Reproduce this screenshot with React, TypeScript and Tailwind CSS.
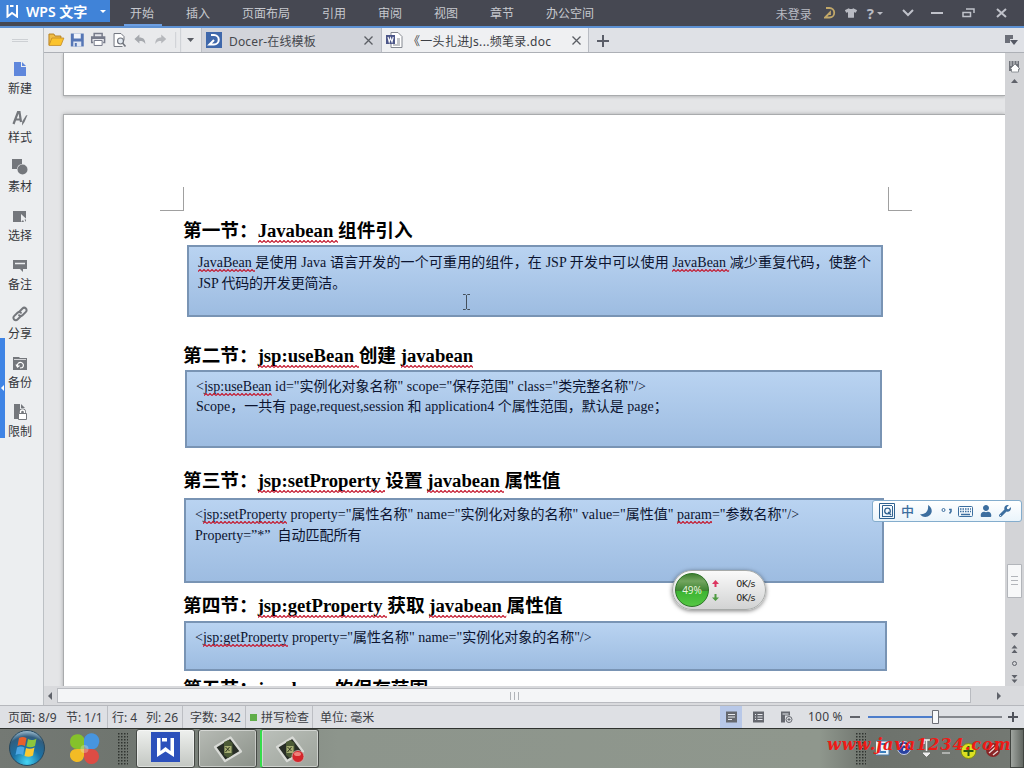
import React from "react";
import { FaUser, FaWrench, FaTshirt } from "react-icons/fa";

const menuItems = ["开始", "插入", "页面布局", "引用", "审阅", "视图", "章节", "办公空间"];

const Typo = ({ children }: { children: React.ReactNode }) => (
  <span className="relative inline-block">
    {children}
    <svg className="absolute left-0 bottom-px w-full h-[3px]">
      <rect width="100%" height="3" fill="url(#squiggle)" />
    </svg>
  </span>
);

const SquiggleDefs = () => (
  <svg className="absolute w-0 h-0">
    <defs>
      <pattern id="squiggle" width="4" height="3" patternUnits="userSpaceOnUse">
        <path d="M0 2.500L2 .5L4 2.500" fill="none" stroke="#c4182e" strokeWidth="1.200" />
      </pattern>
    </defs>
  </svg>
);

const sideTools = [
  {
    label: "新建",
    icon: (
      <>
        <path d="M2 1h7v5h5v9H2z" fill="#5f87dc" />
        <path d="M10 1l4 4h-4z" fill="#5f87dc" />
      </>
    ),
  },
  {
    label: "样式",
    icon: (
      <>
        <path d="M1.500 14L6 2h1.500L9 12M3.500 9.500H8.500" fill="none" stroke="#74777c" strokeWidth="2.200" />
        <path d="M15.500 5l-3 7-2.500 3.500.2-4 3.800-6z" fill="#74777c" />
      </>
    ),
  },
  {
    label: "素材",
    icon: (
      <>
        <path d="M0 0h10v5a5.500 5.500 0 0 0-5 5H0z" fill="#74777c" />
        <circle cx="10.500" cy="10.500" r="5" fill="#74777c" />
      </>
    ),
  },
  {
    label: "选择",
    icon: (
      <>
        <path d="M1 3h13v11H1z" fill="#74777c" />
        <path d="M9 6v8l2-2 1.500 3 1.500-1-1.500-2.500H15z" fill="#eceef0" />
      </>
    ),
  },
  {
    label: "备注",
    icon: (
      <>
        <path d="M1 3h14v9h-4v3l-3-3H1z" fill="#74777c" />
        <path d="M3 6.500h10" stroke="#eceef0" strokeWidth="1.500" />
      </>
    ),
  },
  {
    label: "分享",
    icon: (
      <g fill="none" stroke="#74777c" strokeWidth="2" strokeLinecap="round">
        <path d="M7 6l3.500-3.500a2.400 2.400 0 0 1 3.400 3.400L10.500 9.300a2.400 2.400 0 0 1-3.400 0" />
        <path d="M9 10l-3.500 3.500a2.400 2.400 0 0 1-3.400-3.400L5.500 6.700a2.400 2.400 0 0 1 3.400 0" />
      </g>
    ),
  },
  {
    label: "备份",
    icon: (
      <>
        <path d="M1 2h6l1 1h7v12H1z" fill="#74777c" />
        <path d="M2 4.500h12" stroke="#eceef0" strokeWidth=".8" />
        <path d="M5.500 11a3 3 0 1 1 5 1.500M4 9.500L5.500 12l2-1.500M8 13l3-.5" fill="none" stroke="#fff" strokeWidth="1.200" />
      </>
    ),
  },
  {
    label: "限制",
    icon: (
      <>
        <path d="M2 0h6v5h5v10H2z" fill="#74777c" />
        <path d="M9 0l4 4H9z" fill="#74777c" />
        <path d="M8.500 10V8a2 2 0 0 1 4 0v2" fill="none" stroke="#74777c" strokeWidth="3" />
        <path d="M8.500 10V8a2 2 0 0 1 4 0v2" fill="none" stroke="#fff" strokeWidth="1.400" />
        <path d="M6.500 9.500h8v6h-8z" fill="#fff" stroke="#74777c" />
      </>
    ),
  },
];

const TitleBar = () => (
  <header className="h-7 shrink-0 flex bg-[#464852] border-b-2 border-[#5d91d3] text-xs text-[#c6c8ce]">
    <div className="w-[110px] h-[22px] bg-[#4083d8] flex items-center pl-1.5 text-white">
      <svg width="13" height="14" viewBox="0 0 13 14">
        <path d="M1.500 1v11.500L6 9l5 3.500V1M4 2h3.500" fill="none" stroke="#fff" strokeWidth="2" />
      </svg>
      <span className="ml-[7px] pt-px text-sm leading-none font-semibold w-[64px] whitespace-nowrap">WPS 文字</span>
      <span className="ml-[10px] border-x-[3px] border-x-transparent border-t-[3px] border-t-white" />
    </div>
    <nav className="flex gap-8 pl-[20px] h-[26px]">
      {menuItems.map((item, i) => (
        <span key={item} className="relative leading-[28px]">
          {item}
          {i === 0 && <span className="absolute -left-[6px] bottom-0 w-[38px] h-0.5 bg-[#6d9fe2]" />}
        </span>
      ))}
    </nav>
    <div className="ml-auto flex items-center h-[26px] text-[#b9bbc3]">
      <span className="mr-3 pt-1">未登录</span>
      <svg width="12" height="12" viewBox="0 0 12 12" className="mr-[9px]">
        <path d="M2 1h3.500a4.500 4.500 0 0 1 0 9.500H1L6 5.500v2.500" fill="none" stroke="#c2a869" strokeWidth="1.800" />
      </svg>
      <FaTshirt className="mr-2.5 text-[12px]" />
      <span className="text-[15px] leading-none font-bold font-['Noto_Sans']">?</span>
      <span className="ml-[3px] mr-[19px] border-x-[3px] border-x-transparent border-t-[3px] border-t-[#b9bbc3]" />
      <svg width="116" height="14" viewBox="0 0 116 14" className="mr-[6px]" fill="none" stroke="#c0c2ca" strokeWidth="2">
        <path d="M1 4l5 5 5-5M29 7h12" />
        <path d="M61 6.500h7.500v4H61zM64 3h8v4" strokeWidth="1.500" />
        <path d="M95 3l9 8M104 3l-9 8" />
      </svg>
    </div>
  </header>
);

const TabBar = () => (
  <div className="h-[25px] shrink-0 flex border-b border-[#adb0b6] bg-[#dfe1e6] text-xs text-[#45474d]">
    <div className="w-[158px] bg-[#e9eaec] border-r border-[#bdc0c5] flex items-center">
      <svg width="158" height="24" viewBox="0 0 158 24">
        {/* open */}
        <path d="M5 17V6h5l1 2h6v3" fill="#f0bd45" stroke="#b78122" />
        <path d="M5 17.500L8 10h12l-3 7.500z" fill="#fbc32d" stroke="#c28a24" strokeWidth=".8" />
        {/* save */}
        <path d="M27 5.500h13v13H27z" fill="#5676b5" />
        <path d="M30 5.500h7v5h-7z" fill="#f0f3fa" />
        <path d="M29.500 13.500h8v5h-8z" fill="#dfe6f3" />
        <path d="M31 15h2v3.500h-2z" fill="#5676b5" />
        {/* print */}
        <path d="M50.500 9V5.500h8V9M49.500 14.500h-1.500v-5.500h13v5.500H59.500" fill="#e6e7ec" stroke="#777b8a" strokeWidth="1.500" />
        <path d="M50.500 12.500h8v5h-8z" fill="#fff" stroke="#777b8a" />
        <path d="M48 10h13" stroke="#777b8a" strokeWidth="2" />
        {/* preview */}
        <path d="M79 18.500h-8.500v-13h7l3 3v4" fill="#fff" stroke="#70747d" />
        <circle cx="77" cy="13" r="3" fill="#e3eaf1" stroke="#70747d" strokeWidth="1.200" />
        <path d="M79 15l3 3.500" stroke="#70747d" strokeWidth="1.600" />
        {/* undo / redo */}
        <path d="M91 11l5-4.500v3c4 0 6 2 6 6.500-1.500-2.500-3-3-6-3v2.500z" fill="#a6a9ae" />
        <path d="M123 11l-5-4.500v3c-4 0-6 2-6 6.500 1.500-2.500 3-3 6-3v2.500z" fill="#b6b8bc" />
        <path d="M132.500 4v16M137.500 0v24" stroke="#cdd0d4" />
        <path d="M144 10h7l-3.500 4z" fill="#595c63" />
      </svg>
    </div>
    <div className="w-[180px] bg-[#d2d4da] border-r border-[#b9bcc3] flex items-center pl-[4px]">
      <svg width="16" height="16" viewBox="0 0 16 16">
        <path d="M0 0h16v16H0z" fill="#3f68ab" />
        <path d="M5 3h3a4.500 4.500 0 0 1 0 9.500H3.500L8 8" fill="none" stroke="#fff" strokeWidth="2" />
      </svg>
      <span className="ml-[7px] pt-[3px] tracking-[0.15px]">Docer-在线模板</span>
      <svg width="9" height="9" className="ml-auto mr-[8px]" stroke="#5b5e64" strokeWidth="1.300">
        <path d="M.5.5l8 8M8.500.5l-8 8" />
      </svg>
    </div>
    <div className="w-[207px] bg-[#eff0f2] border-r border-[#b9bcc3] flex items-center pl-1">
      <svg width="17" height="16" viewBox="0 0 17 16">
        <path d="M5 .5h7l4 4v11H5z" fill="#fff" stroke="#858991" />
        <path d="M11 7h3M11 9h3M11 11h3M7 13h7" stroke="#858991" />
        <path d="M0 3h9v9H0z" fill="#4c5688" />
        <path d="M2 5l1.200 5L4.500 6 6 10l1.200-5" fill="none" stroke="#fff" strokeWidth="1.100" />
      </svg>
      <span className="ml-[5px] pt-[3px] w-[142px] whitespace-nowrap tracking-[0.3px] text-[#3d3f45]">《一头扎进Js...频笔录.doc</span>
      <svg width="9" height="9" className="ml-auto mr-[7px]" stroke="#5b5e64" strokeWidth="1.300">
        <path d="M.5.5l8 8M8.500.5l-8 8" />
      </svg>
    </div>
    <svg width="12" height="12" className="ml-2 mt-[7px]" stroke="#5a5d68" strokeWidth="2">
      <path d="M6 0v12M0 6h12" />
    </svg>
    <svg width="13" height="12" className="ml-auto mr-[6px] mt-[6px]">
      <path d="M0 1h8v4H5v4H0z" fill="#6b6e78" />
      <path d="M5 6h8l-4 5z" fill="#555864" />
    </svg>
  </div>
);

const Sidebar = () => (
  <aside className="relative w-11 shrink-0 bg-[#eceef0] border-r border-[#bcc0c4] flex flex-col pr-[4px]">
    <div className="self-center mt-[11px] w-4 h-[3px] border-y border-[#cdd0d4]" />
    <div className="mt-[19px]">
      {sideTools.map((tool) => (
        <div key={tool.label} className="h-[49px] flex flex-col items-center">
          <svg width="16" height="16" viewBox="0 0 16 16">
            {tool.icon}
          </svg>
          <span className="mt-1 ml-px text-xs leading-4 text-[#34363b]">{tool.label}</span>
        </div>
      ))}
    </div>
    <div className="absolute left-0 top-[310px] w-[5px] h-[100px] bg-[#3f84e5] flex items-center">
      <span className="border-y-[3px] border-y-transparent border-r-[3px] border-r-white ml-px" />
    </div>
  </aside>
);

const Heading = ({ children }: { children: React.ReactNode }) => (
  <h2 className="h-[26px] -ml-px text-[18.67px] leading-[26px] font-bold text-black whitespace-pre">{children}</h2>
);

const box =
  "border-2 border-[#7994b4] bg-gradient-to-b from-[#b9d3f1] to-[#9dbce1] pl-[9px] text-sm text-[#0c1430] whitespace-pre";

const Document = () => (
  <div className="relative flex-1 bg-[#e4e5e7] pl-[19px] overflow-hidden font-['Liberation_Serif','Noto_Sans_CJK_SC',serif]">
    <div className="h-[43px] bg-white border-b border-l border-[#a9abad] shadow-[0_1px_3px_rgba(0,0,0,0.2)]" />
    <div className="mt-[18px] h-[600px] bg-white border-t border-l border-[#a9abad] shadow-[0_0_4px_rgba(0,0,0,0.25)]">
      <div className="flex justify-between pt-[72px] pl-[96px] pr-[93px]">
        <div className="w-6 h-6 border-r border-b border-[#a0a0a0]" />
        <div className="w-6 h-6 border-l border-b border-[#a0a0a0]" />
      </div>
      <div className="pl-[120px] pt-[7px]">
        <section className="h-[125px]">
          <Heading>第一节：<Typo>Javabean </Typo>组件引入</Heading>
          <div className={`${box} mt-px ml-[3px] w-[696px] h-[72px] pt-[5px] leading-[21px]`}>
            <p className="w-[673px] [text-align-last:justify] whitespace-normal">
              <Typo>JavaBean&nbsp;</Typo>是使用 Java 语言开发的一个可重用的组件，在 JSP 开发中可以使用 <Typo>JavaBean&nbsp;</Typo>减少重复代码，使整个
            </p>
            <p className="tracking-[-0.15px]">JSP 代码的开发更简洁。</p>
          </div>
        </section>
        <section className="h-[125px]">
          <Heading>第二节：<Typo>jsp:useBean </Typo>创建 <Typo>javabean</Typo></Heading>
          <div className={`${box} mt-px ml-px w-[697px] h-[78px] pt-[5px] leading-5`}>
            <p>&lt;<Typo>jsp:useBean</Typo> id="实例化对象名称" scope="保存范围" class="类完整名称"/&gt;</p>
            <p>Scope，一共有 page,request,session 和 application4 个属性范围，默认是 page；</p>
          </div>
        </section>
        <section className="h-[125px]">
          <Heading>第三节：<Typo>jsp:setProperty </Typo>设置 <Typo>javabean </Typo>属性值</Heading>
          <div className={`${box} mt-1 w-[700px] h-[85px] pt-1 leading-[21px]`}>
            <p>&lt;<Typo>jsp:setProperty</Typo> property="属性名称" name="实例化对象的名称" value="属性值" <Typo>param</Typo>="参数名称"/&gt;</p>
            <p>Property=”*”  自动匹配所有</p>
          </div>
        </section>
        <section className="h-[83px]">
          <Heading>第四节：<Typo>jsp:getProperty </Typo>获取 <Typo>javabean </Typo>属性值</Heading>
          <div className={`${box} mt-0.5 w-[703px] h-[50px] pt-1 leading-[21px]`}>
            <p>&lt;<Typo>jsp:getProperty</Typo> property="属性名称" name="实例化对象的名称"/&gt;</p>
          </div>
        </section>
        <Heading>第五节：javabean 的保存范围</Heading>
      </div>
    </div>
    {/* text cursor */}
    <svg width="9" height="16" className="absolute left-[418px] top-[241px]" fill="none" stroke="#44505c">
      <path d="M1 .5h2.500l1 1 1-1H8M4.500 1v14M1 15.500h2.500l1-1 1 1H8" />
    </svg>
  </div>
);

const VerticalScroll = () => (
  <svg width="19" height="633" className="shrink-0 bg-[#d3d4d7]">
    <path d="M4 8h10v10H4z" fill="#6f7279" />
    <path d="M6 8v5M9 8v4M12 8v3" stroke="#d3d4d7" />
    <path d="M10 11l5 5h-1.500v3h-7v-3H5z" fill="#fff" stroke="#6f7279" strokeWidth=".7" />
    <path d="M6 30h7l-3.500-4z" fill="#5f626a" />
    <path d="M2.500 511.500h14v33h-14z" fill="#f7f8f9" stroke="#b2b5ba" />
    <path d="M6 523.500h7M6 527.500h7M6 531.500h7" stroke="#b2b5ba" />
    <g fill="#5f626a">
      <path d="M6 580h7l-3.500 4zM6.500 595.500h6l-3-3.500zM6.500 600h6l-3-3.500zM6.500 622h6l-3 3.500zM6.500 626.500h6l-3 3.500z" />
    </g>
    <circle cx="9.500" cy="610.500" r="2" fill="none" stroke="#5f626a" />
  </svg>
);

const HorizontalScroll = () => (
  <div className="h-[19px] shrink-0 flex items-center bg-[#d9dadd]">
    <span className="ml-1 border-y-[4px] border-y-transparent border-r-[4px] border-r-[#5f626a]" />
    <div className="ml-[5px] w-[914px] h-[15px] bg-[#f4f5f7] border border-[#b9bbc0] flex justify-center items-center gap-[3px]">
      <span className="w-px h-2 bg-[#b0b3b8]" />
      <span className="w-px h-2 bg-[#b0b3b8]" />
      <span className="w-px h-2 bg-[#b0b3b8]" />
    </div>
    <span className="ml-[26px] border-y-[4px] border-y-transparent border-l-[4px] border-l-[#5f626a]" />
  </div>
);

const StatusBar = () => (
  <footer className="h-[23px] shrink-0 flex items-center bg-[#dee0e4] border-t border-[#b6b8bd] text-xs leading-[22px] text-[#3c3e44] whitespace-nowrap">
    <span className="w-[58px] pl-2 pt-px">页面: 8/9</span>
    <span className="w-[50px] pl-2 pt-px border-r border-[#bcbec3]">节: 1/1</span>
    <span className="w-[38px] pl-1 pt-px">行: 4</span>
    <span className="w-[37px] pt-px border-r border-[#bcbec3]">列: 26</span>
    <span className="w-[63px] pl-[7px] pt-px border-r border-[#bcbec3]">字数: 342</span>
    <span className="w-[67px] pl-1 pt-px border-r border-[#bcbec3] flex items-center">
      <span className="w-[7px] h-[7px] bg-[#60ad49] mr-[4px]" />
      拼写检查
    </span>
    <span className="pl-[7px] pt-px">单位: 毫米</span>
    <svg width="80" height="22" className="ml-auto">
      <path d="M0 0h22v22H0z" fill="#b8c8e8" />
      <path d="M6 5.500h11v11H6zM33 5.500h11v11H33zM61 5.500h9v4H65v7h-4z" fill="#65686f" />
      <path d="M8 8.500h7M8 11h7M8 13.500h4M35 8.500h1M35 11h1M35 13.500h1M37.500 8.500h5M37.500 11h5M37.500 13.500h5M62.500 8h6" stroke="#e7e9ee" />
      <circle cx="69" cy="13.500" r="3" fill="#dee0e4" stroke="#65686f" />
      <path d="M69 12v3M67.500 13.500h3" stroke="#65686f" />
    </svg>
    <span className="ml-2 w-[42px] tracking-[0.2px]">100 %</span>
    <svg width="174" height="22">
      <path d="M0 11h10" stroke="#60636a" strokeWidth="2" />
      <path d="M18 11h67" stroke="#4d7dcb" strokeWidth="2" />
      <path d="M85 11h67" stroke="#85888e" strokeWidth="2" />
      <path d="M82.500 4.500h6v13h-6z" fill="#f8f9fa" stroke="#6c6f76" />
      <path d="M158 11h10M163 6v10" stroke="#50535b" strokeWidth="2" />
    </svg>
  </footer>
);

const TaskGrip = () => (
  <svg width="10" height="32">
    <defs>
      <pattern id="dots" width="3" height="3" patternUnits="userSpaceOnUse">
        <path d="M0 0h1.500v1.500H0z" fill="#303430" />
      </pattern>
    </defs>
    <rect width="10" height="32" fill="url(#dots)" />
  </svg>
);

const Recorder = ({ recording }: { recording?: boolean }) => (
  <svg width="34" height="32" viewBox="0 0 34 32">
    <path d="M4 14L19.500 4.500 30 18.500 14 28z" fill="#282e27" stroke="#d8dad6" strokeWidth="2.200" strokeLinejoin="round" />
    <path d="M13 9l4.500-2 4 3v12l-4.500 3-4-3z" fill="#4b5a36" />
    <path d="M13.500 13h7v7h-7z" fill="#a5ad72" />
    <path d="M14.500 14l4 4M18.500 14l-4 5" stroke="#303820" />
    {recording && (
      <>
        <circle cx="25" cy="23.500" r="6" fill="#d4252a" stroke="#c9b5b2" strokeWidth=".8" />
        <ellipse cx="24.500" cy="21" rx="3.500" ry="2" fill="#f0827b" />
      </>
    )}
  </svg>
);

const task =
  "w-[59px] h-[39px] mr-[3px] rounded-[3px] border border-[#454945] flex items-center justify-center shadow-[inset_0_0_0_1px_rgba(255,255,255,0.45)]";

const Taskbar = () => (
  <div className="relative h-10 shrink-0 flex items-center border-t border-[#2f332f] bg-[linear-gradient(90deg,#747974_0%,#6f756f_12%,#8d958c_33%,#8f978d_80%,#6d726c_85%,#747973_100%)]">
    <svg width="40" height="39" viewBox="0 0 40 39" className="ml-[7px]">
      <defs>
        <radialGradient id="orb" cx=".5" cy=".9" r=".9">
          <stop offset="0" stopColor="#45d6f5" />
          <stop offset=".45" stopColor="#1a71a5" />
          <stop offset=".8" stopColor="#315d7e" />
          <stop offset="1" stopColor="#a6c4d6" />
        </radialGradient>
      </defs>
      <circle cx="20" cy="19" r="17.500" fill="url(#orb)" stroke="#26485e" />
      <path d="M12 9c3-1.500 5-1 7.500 0L18 17c-2.500-1.300-5-1.300-7.500 0z" fill="#e8602c" />
      <path d="M21 10c2.500 1.500 5.500 1.500 8.500-.5L28 17c-3 1.500-5.500 1.500-8.500.5z" fill="#8cc63e" />
      <path d="M10 18.500c3-1.500 5-1 7.500 0L16 26c-2.500-1.300-5-1.300-7.500 0z" fill="#4ba6e4" />
      <path d="M19 19c2.500 1 5.500 1 8.500-.5L26 26.500c-3 1.500-5.500 1.500-8.500.5z" fill="#fbc931" />
    </svg>
    <svg width="32" height="34" viewBox="0 0 32 34" className="ml-[21px]">
      <path d="M2 10a7.500 7.500 0 0 1 14-4v11H9a7 7 0 0 1-7-7z" fill="#85c22b" />
      <path d="M31 11A7.500 7.500 0 0 0 16 7v7a8 8 0 0 0 7.500 3.500 8 8 0 0 0 7.500-6.500z" fill="#4795df" />
      <path d="M2 22q1-5 7-5h7v7a7 7 0 0 1-14-2z" fill="#f2bb25" />
      <path d="M16 17h7a7.500 7.500 0 1 1-7 8z" fill="#dd4c44" />
      <circle cx="16.500" cy="17" r="4" fill="#e6e6cf" opacity=".35" />
    </svg>
    <div className="ml-[18px] mr-2"><TaskGrip /></div>
    <div className={`${task} bg-gradient-to-b from-[#eef0ee] to-[#c3c7c2]`}>
      <svg width="29" height="30" className="-mt-1">
        <path d="M0 0h29v30H0z" fill="#2c50bb" />
        <path d="M6 6h3.500v13l5-4 5 4V6H23v19l-8.500-5.500L6 25zM11 6h5v3.500h-5z" fill="#fff" />
      </svg>
    </div>
    <div className={`${task} bg-gradient-to-br from-[#b7bbb5] to-[#8b9189]`}><Recorder /></div>
    <div className={`${task} bg-gradient-to-br from-[#bbc0ba] to-[#9da39b] border-l-2 border-l-[#35dc4b]`}><Recorder recording /></div>
    <div className="ml-auto mr-2.5"><TaskGrip /></div>
    <svg width="144" height="26" viewBox="0 0 144 26">
      <path d="M-1 5h14v14H-1z" fill="#eaf3fb" stroke="#4b7ba5" />
      <path d="M3 8h7M4 8v8h6" fill="none" stroke="#387ebd" strokeWidth="2" />
      <circle cx="28" cy="12" r="6.500" fill="#2942a1" stroke="#cad2eb" />
      <path d="M26 10q2-3 4 0t-2 3v2" fill="none" stroke="#fff" strokeWidth="1.500" />
      <path d="M47 4h7M48 3v5M50.500 4v11" stroke="#eee" strokeWidth="1.500" />
      <path d="M47 17h7l-3.500 3.500zM66 17h8" fill="#eee" stroke="#eee" />
      <circle cx="92.500" cy="15" r="7.500" fill="#dce021" stroke="#798c19" />
      <path d="M92.500 10v10M87.500 15h10" stroke="#285914" strokeWidth="2" />
      <circle cx="117" cy="14" r="7" fill="#892426" />
      <path d="M113 17l8-7M113 13l5-4M117 19l5-4" stroke="#e9d6d6" strokeWidth="1.300" />
    </svg>
    <div className="w-[14px] shrink-0 -ml-2.5 h-[39px] border border-[#414541] bg-gradient-to-r from-[#a0a5a0] to-[#626762]" />
    <span className="absolute left-[827px] top-[6px] text-[16px] leading-5 font-bold italic tracking-[1px] text-[#ee1a16] whitespace-nowrap font-['DejaVu_Serif',serif]">
      www.java1234.com
    </span>
  </div>
);

const ImeBar = () => (
  <div className="absolute left-[872px] top-[500px] w-[150px] h-[22px] rounded-[3px] border border-[#84adcd] bg-gradient-to-b from-white to-[#eaf4fb] flex items-center pl-[6px] gap-[7px] text-[#3c6e9f]">
    <svg width="16" height="16" fill="none" stroke="#2f6291">
      <path d="M.5.5h15v15H.5zM3.500 13V2.500H13M3 13.500h10.500V3" />
      <circle cx="8.500" cy="8" r="2.800" strokeWidth="1.300" />
      <path d="M9 9l3 3" strokeWidth="1.300" />
    </svg>
    <span className="-ml-px text-[13px] leading-none font-medium w-[13px]">中</span>
    <svg width="12" height="12" className="-ml-px">
      <path d="M8 0c4 2.500 5 7 2 10s-8 2.500-10-1c4 1 9-2 8-9z" fill="#3c6e9f" />
    </svg>
    <svg width="12" height="10" className="ml-0.5" fill="none" stroke="#3c6e9f">
      <circle cx="2.500" cy="4" r="1.500" />
      <path d="M8 3.500h2v2L8.500 7.500" strokeWidth="1.500" />
    </svg>
    <svg width="15" height="11" className="-ml-0.5" fill="none" stroke="#3c6e9f">
      <rect x=".5" y=".5" width="14" height="10" rx="1" />
      <path d="M2 3h11M2 5.500h11" strokeDasharray="1.500 1" strokeWidth="1.500" />
      <path d="M3 8.500h9" strokeWidth="1.500" />
    </svg>
    <FaUser className="text-[12px]" />
    <FaWrench className="text-[12px]" />
  </div>
);

const SpeedWidget = () => (
  <div className="absolute left-[672px] top-[570px] w-[94px] h-[40px] rounded-full border border-[#a7aaa8] bg-gradient-to-b from-[#fafafa] to-[#d2d3d3] shadow-[0_1px_4px_rgba(0,0,0,0.5)] flex items-center">
    <div className="ml-0.5 w-[34px] h-[34px] rounded-full border border-[#2c7326] bg-[linear-gradient(180deg,#3f7f31_0%,#72a55f_22%,#3d8230_53%,#3cb432_54%,#55c744_100%)] flex items-center justify-center text-[10px] text-[#e7f6df]">
      49%
    </div>
    <svg width="8" height="24" className="ml-[3px] mt-px">
      <path d="M3.500 1L7 5H4.500v3h-2V5H0z" fill="#dc3560" />
      <path d="M3.500 22L7 18.500H4.500V15h-2v3.500H0z" fill="#4f9b42" />
    </svg>
    <div className="ml-auto mt-0.5 mr-[10px] text-[9.500px] leading-[14px] text-[#1e1f20] text-right font-['DejaVu_Sans',sans-serif] tracking-[-0.4px]">
      <p>0K/s</p>
      <p>0K/s</p>
    </div>
  </div>
);

export default function App() {
  return (
    <div className="relative w-[1024px] h-[768px] flex flex-col overflow-hidden bg-[#e4e5e7] font-['Noto_Sans','Noto_Sans_CJK_SC',sans-serif]">
      <SquiggleDefs />
      <TitleBar />
      <div className="flex-1 min-h-0 flex">
        <Sidebar />
        <div className="flex-1 min-w-0 flex flex-col">
          <TabBar />
          <div className="flex-1 min-h-0 flex">
            <Document />
            <VerticalScroll />
          </div>
          <HorizontalScroll />
        </div>
      </div>
      <StatusBar />
      <Taskbar />
      <ImeBar />
      <SpeedWidget />
    </div>
  );
}
